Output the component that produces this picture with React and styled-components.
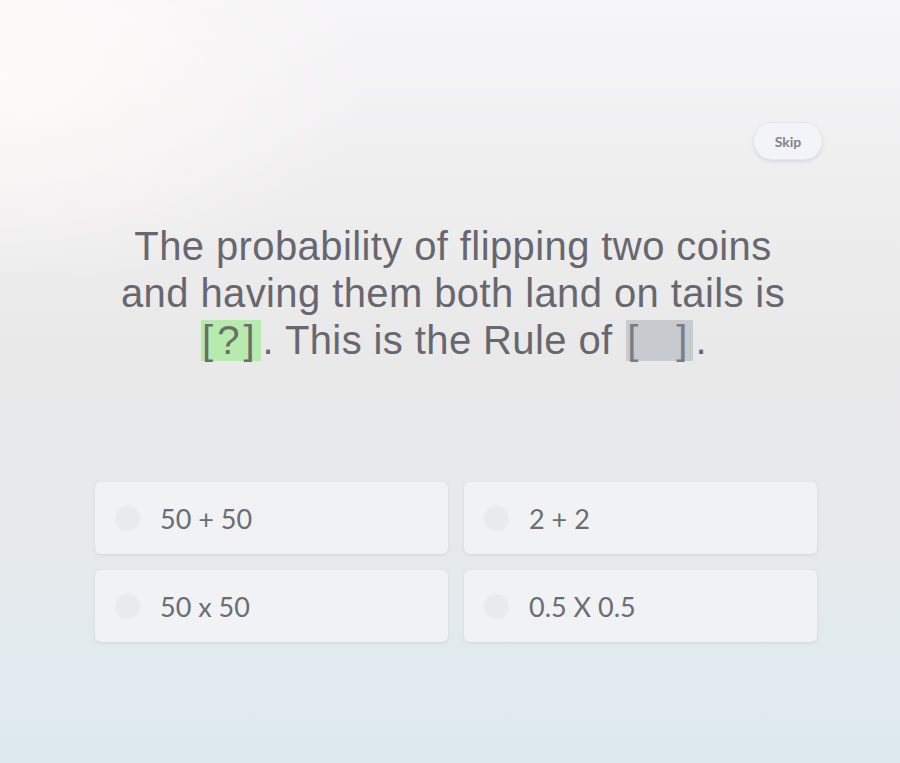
import styled, { createGlobalStyle } from 'styled-components'

const GlobalStyle = createGlobalStyle`
  html, body {
    margin: 0;
    padding: 0;
  }
  body {
    font-family: 'Lato', 'Liberation Sans', sans-serif;
  }
`

const options = ['50 + 50', '2 + 2', '50 x 50', '0.5 X 0.5']

const App = () => {
  return (
    <Page>
      <GlobalStyle />
      <TopBar>
        <SkipButton type='button'>Skip</SkipButton>
      </TopBar>
      <Question>
        The probability of flipping two coins
        <br />
        and having them both land on tails is
        <br />
        <Blank $variant='answer'>[?]</Blank>. This is the Rule of <Blank $variant='empty'>[<Gap />]</Blank>.
      </Question>
      <OptionsGrid>
        {options.map(opt => (
          <OptionCard key={opt}>
            <Radio />
            <OptionText>{opt}</OptionText>
          </OptionCard>
        ))}
      </OptionsGrid>
    </Page>
  )
}

const Page = styled.div`
  width: 900px;
  height: 763px;
  box-sizing: border-box;
  padding: 122px 77px 0 95px;
  overflow: hidden;
  background:
    radial-gradient(ellipse 60% 40% at 0% 10%, rgba(255, 252, 250, 0.9), rgba(255, 252, 250, 0) 70%),
    linear-gradient(180deg, #f6f5f7 0%, #efeeef 25%, #eae9ea 45%, #e7e9eb 65%, #e2eaee 85%, #dde9ef 100%);
  display: flex;
  flex-direction: column;
`

const TopBar = styled.div`
  display: flex;
  justify-content: flex-end;
`

const SkipButton = styled.button`
  width: 70px;
  height: 38px;
  border-radius: 19px;
  border: 1.5px solid #e4e8ee;
  background: #f3f4f7;
  box-shadow: 0 2px 3px rgba(150, 160, 175, 0.25);
  color: #80838c;
  font-family: 'Lato', sans-serif;
  font-weight: 700;
  font-size: 14px;
  padding: 0;
`

const Question = styled.p`
  margin: 63px 0 0 0;
  padding-right: 12px;
  text-align: center;
  font-family: 'Liberation Sans', Arial, sans-serif;
  font-size: 40px;
  letter-spacing: 0.4px;
  line-height: 47px;
  color: #68676f;
`

const Blank = styled.span`
  display: inline-block;
  line-height: 41px;
  padding: 0 2px 0 1px;
  margin: 0 2px;
  letter-spacing: 4px;
  color: ${p => p.$variant === 'answer' ? '#6a6f6a' : '#7a7d84'};
  background: ${p => p.$variant === 'answer' ? '#b7ebae' : '#c7cacf'};
`

const Gap = styled.span`
  display: inline-block;
  width: 34px;
`

const OptionsGrid = styled.div`
  margin-top: 118px;
  display: grid;
  grid-template-columns: 353px 353px;
  grid-auto-rows: 72px;
  column-gap: 16px;
  row-gap: 16px;
`

const OptionCard = styled.div`
  display: flex;
  align-items: center;
  padding-left: 20px;
  border-radius: 6px;
  background: rgba(242, 243, 245, 0.85);
  box-shadow: 0 1px 3px rgba(170, 175, 185, 0.35);
`

const Radio = styled.span`
  width: 25px;
  height: 25px;
  border-radius: 50%;
  background: #e9eaec;
`

const OptionText = styled.span`
  margin-left: 20px;
  font-family: 'Lato', sans-serif;
  font-size: 27px;
  color: #6a6d74;
`

export default App
